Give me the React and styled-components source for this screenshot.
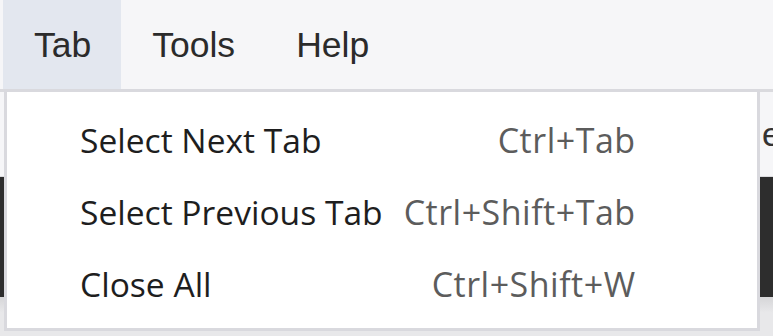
import React from 'react';
import styled, { createGlobalStyle } from 'styled-components';

const menus = ['Tab', 'Tools', 'Help'];

const tabItems = [
	{ label: 'Select Next Tab', shortcut: 'Ctrl+Tab' },
	{ label: 'Select Previous Tab', shortcut: 'Ctrl+Shift+Tab' },
	{ label: 'Close All', shortcut: 'Ctrl+Shift+W' },
];

const App = () => {
	return (
		<>
			<GlobalStyle />
			<Window>
				<MenuBar>
					{menus.map(name => (
						<MenuButton key={name} active={name === 'Tab'}>
							{name}
						</MenuButton>
					))}
				</MenuBar>
				<Toolbar>
					<ToolbarText>editor</ToolbarText>
				</Toolbar>
				<Editor />
				<StatusArea />

				<Dropdown>
					{tabItems.map(item => (
						<Item key={item.label}>
							<Label>{item.label}</Label>
							<Shortcut>{item.shortcut}</Shortcut>
						</Item>
					))}
				</Dropdown>
			</Window>
		</>
	);
};

const GlobalStyle = createGlobalStyle`
	html, body {
		margin: 0;
		padding: 0;
		overflow: hidden;
		background: #e6e6e8;
	}
`;

const Window = styled.div`
	position: relative;
	display: flex;
	flex-direction: column;
	height: 336px;
	font-family: 'Liberation Sans', Arial, sans-serif;
`;

/* ----------- Menu bar ----------- */
const MenuBar = styled.nav`
	display: flex;
	height: 89px;
	padding-left: 3px;
	background: #f6f6f8;
`;

const MenuButton = styled.div`
	display: flex;
	align-items: center;
	padding: 2px 30px 0 31px;
	font-size: 35.5px;
	color: #2b2b2b;
	background: ${props => (props.active ? '#e3e7ef' : 'transparent')};
`;

/* ----------- Behind the menu ----------- */
const Toolbar = styled.div`
	display: flex;
	align-items: center;
	height: 84px;
	padding-left: 762px;
	border-top: 3px solid #dadade;
	border-bottom: 1px solid #dcdcdf;
	background: #f6f6f8;
	overflow: hidden;
	white-space: nowrap;
`;

const ToolbarText = styled.span`
	font-size: 34px;
	color: #333;
`;

const Editor = styled.div`
	height: 120px;
	background: #2d2d2d;
`;

const StatusArea = styled.div`
	flex: 1;
	background: linear-gradient(#d6d6d8, #e8e8ea 40%);
`;

/* ----------- Dropdown ----------- */
const Dropdown = styled.div`
	position: absolute;
	top: 89px;
	left: 4px;
	display: grid;
	grid-template-columns: max-content max-content;
	column-gap: 21px;
	align-content: start;
	box-sizing: border-box;
	width: 756px;
	height: 242px;
	padding: 12px 0 0 73px;
	border: 3px solid #d9d9de;
	background: #fff;
	font-family: 'Open Sans', 'Noto Sans', sans-serif;
`;

const Item = styled.div`
	display: grid;
	grid-column: 1 / -1;
	grid-template-columns: subgrid;
	align-items: center;
	height: 72px;
`;

const Label = styled.span`
	font-size: 33.6px;
	color: #1e1e1e;
`;

const Shortcut = styled.span`
	justify-self: end;
	font-size: 34px;
	letter-spacing: 0.5px;
	color: #5c5c5c;
`;

export default App;
